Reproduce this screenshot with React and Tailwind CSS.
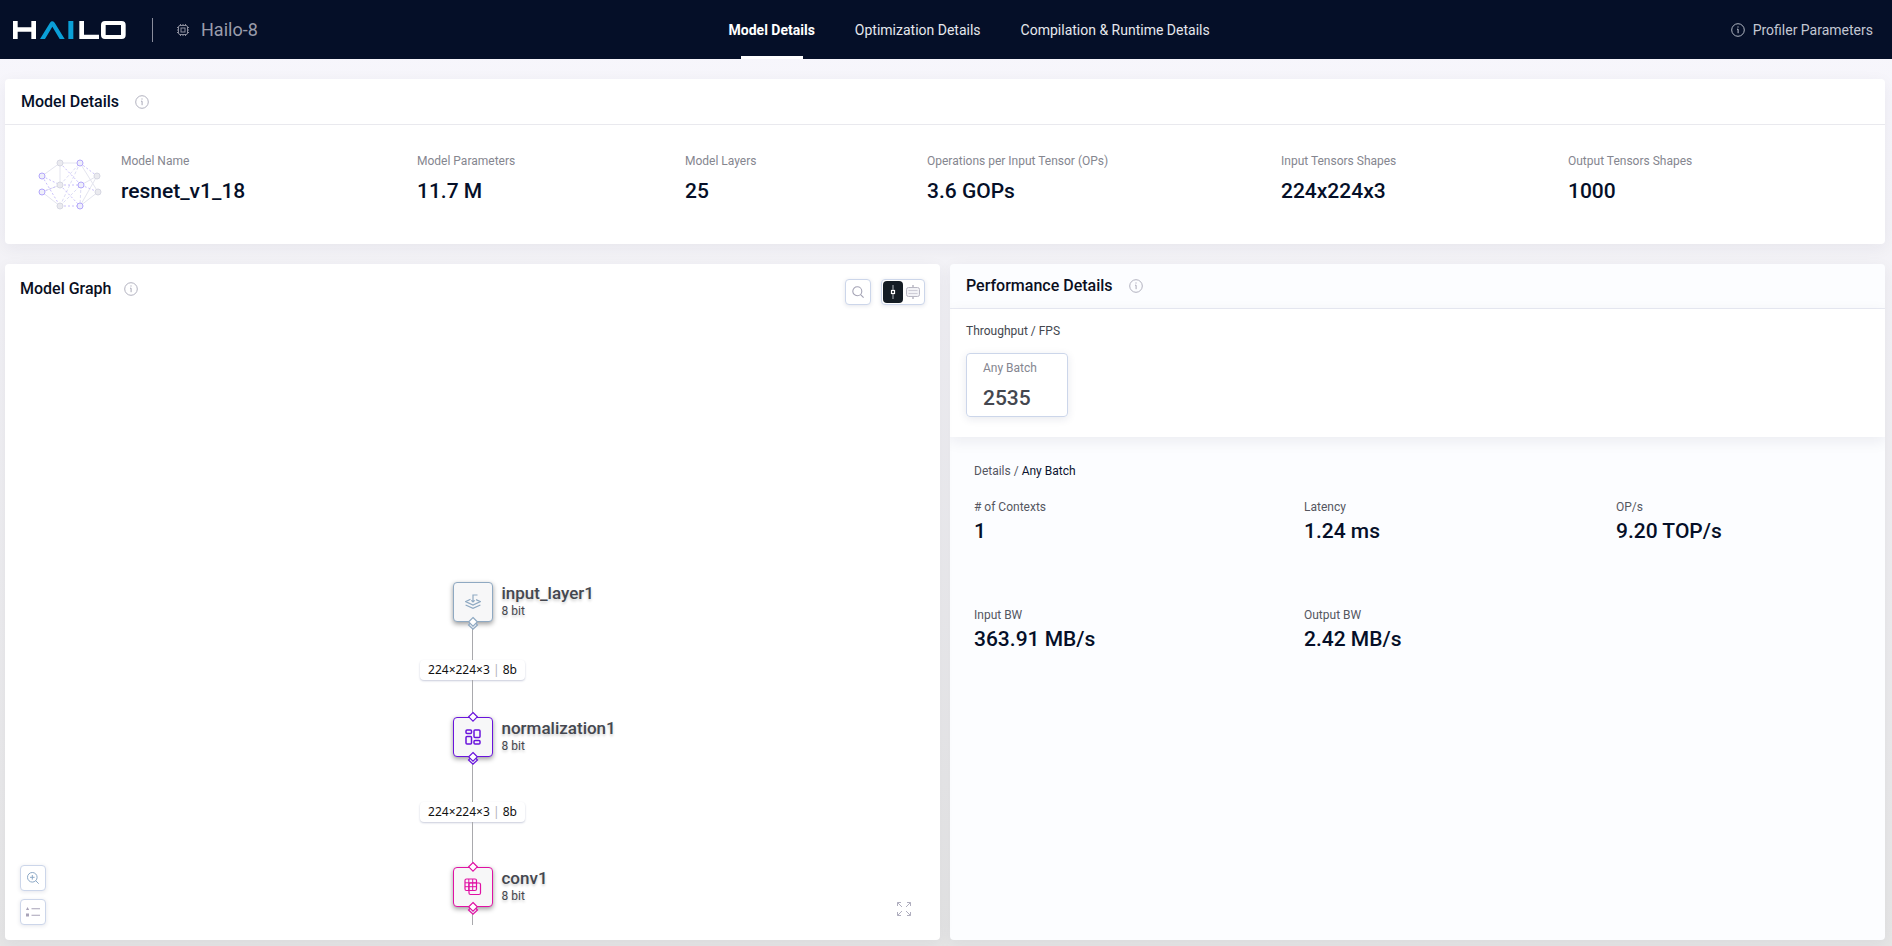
const modelStats = [
  { label: 'Model Name', value: 'resnet_v1_18' },
  { label: 'Model Parameters', value: '11.7 M' },
  { label: 'Model Layers', value: '25' },
  { label: 'Operations per Input Tensor (OPs)', value: '3.6 GOPs' },
  { label: 'Input Tensors Shapes', value: '224x224x3' },
  { label: 'Output Tensors Shapes', value: '1000' },
];

const batchDetails = [
  { label: '# of Contexts', value: '1' },
  { label: 'Latency', value: '1.24 ms' },
  { label: 'OP/s', value: '9.20 TOP/s' },
  { label: 'Input BW', value: '363.91 MB/s' },
  { label: 'Output BW', value: '2.42 MB/s' },
];

const tabs = ['Model Details', 'Optimization Details', 'Compilation & Runtime Details'];

function Logo() {
  return (
    <svg width="113" height="18" viewBox="0 0 339 54" role="img" aria-label="Hailo">
      <g fill="#fff">
        <path d="M0 0h14v19h41V0h14v54H55V32H14v22H0z" />
        <path d="M199 0h14v41h45v13h-59z" />
        <path
          fillRule="evenodd"
          d="M276 0h50q12 0 12 12v30q0 12-12 12h-50q-12 0-12-12V12q0-12 12-12zM278 12v30h46V12z"
        />
      </g>
      <g fill="#0a9fd8">
        <path d="M81 54 111 5q6-8 14 0l30 49h-15L118 17 96 54z" />
        <path d="M166 0h15v54h-15z" />
      </g>
    </svg>
  );
}

function ChipIcon() {
  return (
    <svg width="12" height="12" viewBox="0 0 12 12" fill="none" stroke="#8b8d9c" aria-hidden="true">
      <rect x="1.5" y="1.5" width="9" height="9" rx="1.5" />
      <rect x="4" y="4" width="4" height="4" />
      <path d="M3.5 0v1.5M6 0v1.5M8.5 0v1.5M3.5 10.5V12M6 10.5V12M8.5 10.5V12M0 3.5h1.5M0 6h1.5M0 8.5h1.5M10.5 3.5H12M10.5 6H12M10.5 8.5H12" />
    </svg>
  );
}

function InfoIcon({ className }) {
  return (
    <svg width="14" height="14" viewBox="0 0 14 14" fill="none" stroke="currentColor" className={className} aria-hidden="true">
      <circle cx="7" cy="7" r="6.3" strokeWidth="0.9" />
      <path d="M7 3.4v1.2M6 6.2h1.1v4" strokeWidth="1" />
    </svg>
  );
}

function NetworkIcon() {
  const grey = [[24, 5], [61, 18], [24, 27], [62, 34], [24, 48]];
  const violet = [[44, 5], [6, 18], [6, 34], [45, 27], [44, 48]];
  return (
    <svg width="68" height="54" viewBox="0 0 68 54" fill="none" aria-hidden="true">
      <path d="M24 5h20M24 5v22M24 5 6 18M44 5l18 29M24 27 6 34M6 34l18 14M61 18l-16 9M61 18 44 48M62 34 44 48" stroke="#e4e5ef" />
      <path d="M24 48 44 5M24 48 45 27M24 27 44 5M45 27l-1 21" stroke="#dcdcf5" strokeDasharray="3 2" />
      <path d="M24 5l21 22M44 5l17 13M6 18l18 9M6 18l18 30M6 34 24 27M24 27h21M24 27l20 21M45 27l17 7M24 48h20" stroke="#c9c0fb" strokeDasharray="2 2" />
      {grey.map(([x, y]) => (
        <circle key={`${x}-${y}`} cx={x} cy={y} r="3" fill="#eaeaef" stroke="#d6d7e2" />
      ))}
      {violet.map(([x, y]) => (
        <circle key={`${x}-${y}`} cx={x} cy={y} r="3" fill="#efeffa" stroke="#b3a6fb" />
      ))}
    </svg>
  );
}

function InputLayerIcon() {
  return (
    <svg width="16" height="16" viewBox="0 0 16 16" fill="none" stroke="currentColor" strokeWidth="1.2" aria-hidden="true">
      <path d="M5.5 5.2.6 7.6 8 11l7.4-3.4-4.400-2" />
      <path d="M.6 11 8 14.4l7.4-3.4" />
      <path d="M12.500 1H8v7M6.300 6.300 8 8l1.700-1.700" />
    </svg>
  );
}

function NormalizationIcon() {
  return (
    <svg width="16" height="16" viewBox="0 0 16 16" fill="none" stroke="currentColor" strokeWidth="1.5" aria-hidden="true">
      <rect x="1" y="1" width="5.5" height="3.5" rx="1" />
      <rect x="1" y="7.5" width="5.5" height="7.5" rx="1" />
      <rect x="9" y="1" width="6" height="7.5" rx="1" />
      <rect x="9" y="11.5" width="6" height="3.5" rx="1" />
    </svg>
  );
}

function ConvIcon() {
  return (
    <svg width="18" height="18" viewBox="0 0 18 18" fill="none" stroke="currentColor" aria-hidden="true">
      <rect x="1" y="1" width="11.5" height="11.5" rx="1.5" strokeWidth="1.2" />
      <path d="M4.8 1v11.5M8.7 1v11.5M1 4.8h11.5M1 8.7h11.5" />
      <rect x="5" y="5" width="11.5" height="11.5" rx="1.5" strokeWidth="1.2" />
    </svg>
  );
}

function Port({ className, stacked }) {
  return (
    <svg width="12" height="14" viewBox="0 0 12 14" stroke="currentColor" strokeWidth="1.2" className={`absolute left-1/2 -translate-x-1/2 ${className}`} aria-hidden="true">
      {stacked && <path d="M6 4.5 10.5 9 6 13.2 1.5 9z" fill="#e9ecf2" />}
      <path d="M6 1.5 10.3 5.8 6 10.1 1.7 5.8z" fill="#fff" />
    </svg>
  );
}

function GraphNode({ name, icon, className, hasInput }) {
  return (
    <div className={`relative flex size-10 items-center justify-center rounded border border-current bg-[#f7f7f8] shadow-[0_2px_5px_rgba(0,0,0,0.4)] ${className}`}>
      {icon}
      {hasInput && <Port className="-top-[7px]" />}
      <Port className="-bottom-[9px]" stacked />
      <div className="absolute top-0 left-full pl-[10px] whitespace-nowrap text-[#44474f] [text-shadow:0_2px_3px_rgba(0,0,0,0.2)]">
        <p className="text-[17px] leading-5 font-medium">{name}</p>
        <p className="text-xs leading-4">8 bit</p>
      </div>
    </div>
  );
}

function GraphEdge({ className }) {
  return (
    <div className={`flex flex-col items-center ${className}`}>
      <span className="w-px flex-1 bg-[#a9a9ad]" />
      <span className="rounded bg-white px-2 font-['Noto_Sans'] text-xs leading-5 text-[#111] shadow-[0_1px_2px_rgba(40,50,110,0.25)]">
        224×224×3 <span className="text-[#b0b0b8]">|</span> 8b
      </span>
      <span className="w-px flex-1 bg-[#a9a9ad]" />
    </div>
  );
}

function ToolButton({ label, children }) {
  return (
    <button
      type="button"
      aria-label={label}
      className="flex size-[26px] items-center justify-center rounded border border-[#ccd6ea] bg-white text-[#a3a2b4] shadow-[0_1px_4px_rgba(30,40,90,0.12)]"
    >
      {children}
    </button>
  );
}

function ModelGraph() {
  return (
    <section className="relative rounded bg-white shadow-[0_4px_16px_rgba(30,30,60,0.06)]">
      <div className="absolute inset-x-0 top-0 flex items-start justify-between px-[15px] pt-[15px]">
        <h2 className="flex items-center gap-3 text-base leading-5 font-medium text-[#0b0f1e]">
          Model Graph
          <InfoIcon className="text-[#a9a9b8]" />
        </h2>
        <div className="flex gap-[10px]">
          <ToolButton label="Search layer">
            <svg width="12" height="12" viewBox="0 0 12 12" fill="none" stroke="currentColor" strokeWidth="1.1" aria-hidden="true">
              <circle cx="5.3" cy="5.3" r="4.5" />
              <path d="m8.6 8.6 3 3" />
            </svg>
          </ToolButton>
          <div className="flex h-[26px] items-center rounded border border-[#ccd6ea] bg-white px-px shadow-[0_1px_4px_rgba(30,40,90,0.12)]">
            <button type="button" aria-label="Compact view" className="flex h-[22px] w-5 items-center justify-center rounded bg-[#141c24]">
              <svg width="6" height="14" viewBox="0 0 6 14" fill="none" aria-hidden="true">
                <path d="M3 0v5M3 9v5" stroke="#8d9399" strokeWidth="1.3" />
                <rect x="1.5" y="5.5" width="3" height="3" stroke="#fff" strokeWidth="1.2" />
              </svg>
            </button>
            <button type="button" aria-label="Detailed view" className="flex h-[22px] w-5 items-center justify-center">
              <svg width="14" height="14" viewBox="0 0 14 14" fill="none" stroke="#b9b8c4" aria-hidden="true">
                <path d="M7 0v2.5M7 11.5V14" strokeWidth="1.5" />
                <rect x=".5" y="2.5" width="13" height="9" rx="2" fill="#f2f2f6" />
                <path d="M2.5 5.5h9M2.5 8.5h9" stroke="#cfced8" />
              </svg>
            </button>
          </div>
        </div>
      </div>

      <div className="flex flex-col items-center pt-[318px]">
        <GraphNode name="input_layer1" icon={<InputLayerIcon />} className="text-[#8fa9c2]" />
        <GraphEdge className="h-[95px]" />
        <GraphNode name="normalization1" icon={<NormalizationIcon />} className="text-[#6a14dc]" hasInput />
        <GraphEdge className="h-[110px]" />
        <GraphNode name="conv1" icon={<ConvIcon />} className="text-[#e012a4]" hasInput />
        <span className="h-[18px] w-px bg-[#a9a9ad]" />
      </div>

      <div className="absolute bottom-[15px] left-[15px] flex flex-col gap-2">
        <ToolButton label="Zoom in">
          <svg width="12" height="12" viewBox="0 0 12 12" fill="none" stroke="#8ca8c6" aria-hidden="true">
            <circle cx="5.3" cy="5.3" r="4.8" />
            <path d="m8.7 8.7 3 3M5.3 3v4.600M3 5.3h4.600" />
          </svg>
        </ToolButton>
        <ToolButton label="Legend">
          <svg width="14" height="10" viewBox="0 0 14 10" fill="#a8a3b8" aria-hidden="true">
            <path d="M1.5 0 3.2 3H0zM0 6.5h3v3H0zM5.5 1.2H14v1H5.5zM5.5 7.7H14v1H5.5z" />
          </svg>
        </ToolButton>
      </div>

      <button type="button" aria-label="Fullscreen" className="absolute right-[29px] bottom-6 text-[#b0afbf]">
        <svg width="14" height="14" viewBox="0 0 14 14" fill="none" stroke="currentColor" aria-hidden="true">
          <path d="M.5 4V.5H4M10 .5h3.5V4M13.5 10v3.5H10M4 13.5H.5V10M.5.5 5 5M13.5.5 9 5M13.5 13.5 9 9M.5 13.5 5 9" />
        </svg>
      </button>
    </section>
  );
}

function PerformanceDetails() {
  return (
    <section className="flex flex-col overflow-hidden rounded bg-[#fcfdff] shadow-[0_4px_16px_rgba(30,30,60,0.06)]">
      <h2 className="flex h-[45px] items-center gap-4 border-b border-[#e9ebf3] px-4 text-base leading-5 font-medium text-[#0b0f1e]">
        Performance Details
        <InfoIcon className="text-[#a9a9b8]" />
      </h2>
      <div className="bg-white px-4 pt-[14px] pb-5 shadow-[0_4px_14px_rgba(30,30,60,0.08)]">
        <p className="mb-[14px] text-xs leading-4 text-[#44474f]">Throughput / FPS</p>
        <button
          type="button"
          className="block h-16 w-[102px] rounded border border-[#ccd6ea] px-4 text-left shadow-[0_2px_8px_rgba(30,40,90,0.1)]"
        >
          <span className="mb-[10px] block text-xs leading-4 text-[#85868f]">Any Batch</span>
          <span className="block text-[21px] leading-6 font-medium text-[#44474f]">2535</span>
        </button>
      </div>
      <div className="px-6 pt-[26px]">
        <p className="mb-5 text-xs leading-4 text-[#55575f]">
          Details / <span className="text-[#0b1430]">Any Batch</span>
        </p>
        <dl className="grid grid-cols-[330fr_312fr_245fr] gap-y-16">
          {batchDetails.map((item) => (
            <div key={item.label}>
              <dt className="mb-1 text-xs leading-4 text-[#55575f]">{item.label}</dt>
              <dd className="text-[21px] leading-6 font-medium text-[#050f28]">{item.value}</dd>
            </div>
          ))}
        </dl>
      </div>
    </section>
  );
}

export default function App() {
  return (
    <div className="flex min-h-screen flex-col bg-gradient-to-b from-[#f8f7fd] to-[#e6e6e6] font-[Roboto,sans-serif]">
      <header className="grid h-[59px] grid-cols-[724fr_auto_678fr] bg-[#050f28]">
        <div className="flex items-center pl-[13px]">
          <Logo />
          <span className="ml-[26px] h-6 w-px bg-[#8b8d9c]" />
          <span className="ml-6 flex items-center gap-3 text-lg leading-6 text-[#9a9cab]">
            <ChipIcon />
            Hailo-8
          </span>
        </div>
        <nav className="flex gap-10 text-sm text-[#e6e8ee]">
          {tabs.map((tab, i) => (
            <a
              key={tab}
              href="#"
              className={i === 0 ? 'relative flex items-center font-bold text-white' : 'flex items-center'}
            >
              {tab}
              {i === 0 && <span className="absolute inset-x-3 bottom-0 h-[3px] bg-white" />}
            </a>
          ))}
        </nav>
        <div className="flex items-center justify-end pr-[19px]">
          <button type="button" className="flex items-center gap-2 text-sm text-[#c3c7d3]">
            <InfoIcon />
            Profiler Parameters
          </button>
        </div>
      </header>

      <main className="flex flex-1 flex-col gap-5 pt-5 pr-[7px] pb-[6px] pl-[5px]">
        <section className="rounded bg-white shadow-[0_4px_16px_rgba(30,30,60,0.06)]">
          <h2 className="flex h-[46px] items-center gap-4 border-b border-[#e9e9ee] px-4 text-base leading-5 font-medium text-[#050f28]">
            Model Details
            <InfoIcon className="text-[#a9a9b8]" />
          </h2>
          <div className="flex pt-7 pb-7 pl-[31px]">
            <div className="flex w-[85px] shrink-0 items-center">
              <NetworkIcon />
            </div>
            <dl className="grid flex-1 grid-cols-[296fr_268fr_242fr_354fr_287fr_317fr] pb-[13px]">
              {modelStats.map((item) => (
                <div key={item.label}>
                  <dt className="mb-[10px] text-xs leading-4 text-[#85868f]">{item.label}</dt>
                  <dd className="text-[21px] leading-6 font-medium text-[#050f28]">{item.value}</dd>
                </div>
              ))}
            </dl>
          </div>
        </section>

        <div className="grid flex-1 grid-cols-2 gap-[10px]">
          <ModelGraph />
          <PerformanceDetails />
        </div>
      </main>
    </div>
  );
}
